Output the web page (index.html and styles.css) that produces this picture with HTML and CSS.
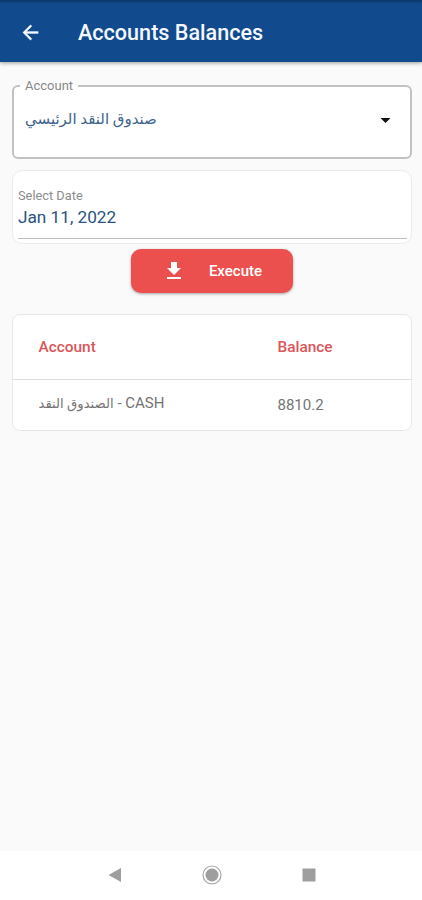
FILE: index.html
```html
<!DOCTYPE html>
<html lang="en">
<head>
<meta charset="utf-8">
<title>Accounts Balances</title>
<link rel="stylesheet" href="styles.css">
</head>
<body>
<header class="appbar">
  <svg class="back" viewBox="0 0 24 24"><path d="M20 11H7.83l5.59-5.59L12 4l-8 8 8 8 1.41-1.41L7.83 13H20z"/></svg>
  <h1>Accounts Balances</h1>
</header>
<main>
  <fieldset class="account">
    <legend>Account</legend>
    <div class="select">
      <span class="arabic" lang="ar">صندوق النقد الرئيسي</span>
      <svg class="caret" viewBox="0 0 10 5"><path d="M0 0h10L5 5z"/></svg>
    </div>
  </fieldset>
  <section class="date">
    <div class="field">
      <label>Select Date</label>
      <span class="value">Jan 11, 2022</span>
    </div>
  </section>
  <button class="execute">
    <svg viewBox="0 0 24 24"><path d="M19 9h-4V3H9v6H5l7 7 7-7zM5 18v2h14v-2H5z"/></svg>
    <span>Execute</span>
  </button>
  <section class="table">
    <div class="row head"><span>Account</span><span>Balance</span></div>
    <div class="row"><span class="name"><span class="arabic" lang="ar">الصندوق النقد</span> - CASH</span><span class="amount">8810.2</span></div>
  </section>
</main>
<nav class="navbar">
  <svg viewBox="0 0 20 20"><path d="M3.5 10L16 3v14z"/></svg>
  <svg viewBox="0 0 20 20"><circle class="ring" cx="10" cy="10" r="9"/><circle cx="10" cy="10" r="6.5"/></svg>
  <svg viewBox="0 0 20 20"><path d="M3.5 3.5h13v13h-13z"/></svg>
</nav>
</body>
</html>
```
FILE: styles.css
```css
* { box-sizing: border-box; }
body {
  margin: 0;
  height: 900px;
  display: flex;
  flex-direction: column;
  overflow: hidden;
  background: #fafafa;
  font-family: Roboto, "DejaVu Sans", sans-serif;
}
.appbar {
  flex: none;
  height: 62px;
  padding: 4px 20px 0 19px;
  display: flex;
  align-items: center;
  background: linear-gradient(#083767 0, #114a8d 4px);
  box-shadow: 0 1px 4px rgba(0, 0, 0, .4);
  color: #f4f8ff;
}
.back { width: 23px; height: 23px; fill: currentColor; stroke: currentColor; stroke-width: .4; margin: -2px 36px 0 0; }
h1 { margin: 0; font-size: 21.6px; line-height: 26px; font-weight: 500; white-space: nowrap; }
main { flex: 1; display: flex; flex-direction: column; padding: 16px 10px 0 12px; }
.account {
  margin: 0;
  min-width: 0;
  height: 81px;
  padding: 0 20px 0 12px;
  border: 2px solid #c2c2c2;
  border-radius: 6px;
  background: #fff;
}
.account legend { margin-left: -6px; padding: 0 5px; font-size: 13px; line-height: 16px; color: #888; }
.select { display: flex; justify-content: space-between; align-items: center; height: 53px; margin-left: -1px; }
.select .arabic { font-size: 15px; color: #3d638b; white-space: nowrap; margin-top: -4px; }
.caret { width: 11px; height: 5px; fill: #111; margin-right: -1px; }
.date {
  height: 74px;
  margin-top: 11px;
  padding: 16px 4px 0 5px;
  border: 1px solid #ebebeb;
  border-radius: 10px;
  background: #fff;
}
.field { height: 52px; display: flex; flex-direction: column; border-bottom: 1px solid #bdbdbd; }
.field label { font-size: 12.8px; line-height: 18px; color: #8c8c8c; }
.value { font-size: 17.2px; line-height: 24px; color: #2b527f; }
.execute {
  align-self: center;
  width: 162px;
  height: 44px;
  margin-top: 5px;
  padding: 0 31px 0 31px;
  display: flex;
  align-items: center;
  justify-content: space-between;
  border: 0;
  border-radius: 10px;
  background: #ec504e;
  box-shadow: 0 1px 3px rgba(0, 0, 0, .35);
  color: #fff;
  font: 500 15px/20px Roboto, sans-serif;
}
.execute svg { width: 24px; height: 24px; fill: currentColor; }
.table { margin-top: 21px; height: 117px; border: 1px solid #e8e8e8; border-radius: 8px; background: #fff; }
.row { height: 50px; padding-left: 25.5px; display: grid; grid-template-columns: 239px 1fr; align-items: center; font-size: 15px; color: #747474; }
.head { height: 65px; border-bottom: 1px solid #dedede; font-size: 15.4px; font-weight: 500; color: #dc5557; }
.name { padding-bottom: 4px; }
.name .arabic { font-size: 13.2px; }
.amount { font-size: 15px; }
.navbar { flex: none; height: 49px; padding: 0 0 2px 2px; display: flex; justify-content: center; align-items: center; gap: 77px; background: #fff; }
.navbar svg { width: 20px; height: 20px; fill: #9e9e9e; }
.ring { fill: none; stroke: #a6a6a6; stroke-width: 1.2; }
```
